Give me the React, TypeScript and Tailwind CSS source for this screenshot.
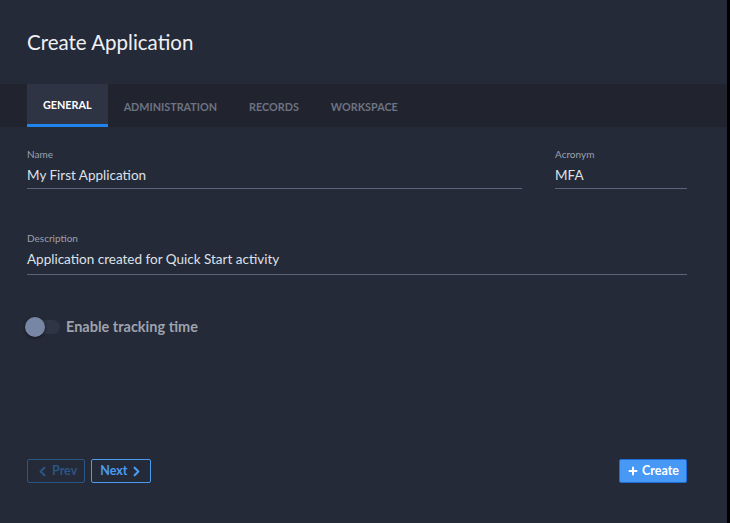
import { Plus, ChevronLeft, ChevronRight } from "lucide-react";

const tabs = ["General", "Administration", "Records", "Workspace"];

function Field({ label, value, className, tall }: { label: string; value: string; className?: string; tall?: boolean }) {
  return (
    <div className={className}>
      <div className="text-[10px] leading-[14px] text-[#9aa1b0]">{label}</div>
      <div
        className={
          tall
            ? "mt-[5px] h-[25px] border-b border-[#5b6478] text-[13.5px] leading-[18px] text-[#dde1e8]"
            : "mt-[5px] h-[23px] border-b border-[#5b6478] text-[13.5px] leading-[18px] text-[#dde1e8]"
        }
      >
        {value}
      </div>
    </div>
  );
}

export default function App() {
  return (
    <div
      className="flex h-[523px] w-[730px] overflow-hidden bg-[#252a38]"
      style={{ fontFamily: "Lato, 'Open Sans', sans-serif" }}
    >
      <div className="flex min-w-0 flex-1 flex-col">
        {/* Header */}
        <div className="flex h-[84px] items-center px-[27px]">
          <h1 className="text-[20.5px] text-[#eef0f4]">Create Application</h1>
        </div>

        {/* Tabs */}
        <div className="flex h-[43px] bg-[#21242e] px-[27px]">
          {tabs.map((t, i) => (
            <div
              key={t}
              className={
                i === 0
                  ? "flex items-center border-b-[3px] border-[#1f84ee] bg-[#2e3444] px-4 pt-[3px] text-[10.8px] font-bold uppercase text-white"
                  : "flex items-center px-4 pt-[3px] text-[10.8px] font-bold uppercase text-[#6d7383]"
              }
            >
              {t}
            </div>
          ))}
        </div>

        {/* Form */}
        <div className="flex flex-1 flex-col px-[27px] pt-[20px]">
          <div className="flex gap-[33px]">
            <Field label="Name" value="My First Application" className="w-[495px]" />
            <Field label="Acronym" value="MFA" className="w-[132px]" />
          </div>
          <Field
            label="Description"
            value="Application created for Quick Start activity"
            className="mt-[42px] w-[660px]"
            tall
          />

          <div className="mt-[41px] flex items-center gap-[6px]">
            <div className="relative h-[14px] w-[33px] rounded-full bg-[#2f3545]">
              <div className="absolute -left-[2px] -top-[3px] h-[20px] w-[20px] rounded-full bg-[#7886a6] shadow-[0_1px_3px_rgba(0,0,0,0.6)]" />
            </div>
            <span className="text-[14.5px] font-bold text-[#9ea3ad]">Enable tracking time</span>
          </div>

          <div className="mt-auto mb-[40px] flex items-center">
            <button className="flex h-[24px] items-center gap-[2px] rounded-[2px] border border-[#2b5585] pl-[7px] pr-[7px] text-[12.5px] font-bold text-[#2b5585]">
              <ChevronLeft size={15} strokeWidth={3.5} />
              Prev
            </button>
            <button className="ml-[6px] flex h-[24px] items-center gap-[2px] rounded-[2px] border border-[#4b9cf0] pl-[8px] pr-[6px] text-[12.5px] font-bold text-[#4b9cf0]">
              Next
              <ChevronRight size={15} strokeWidth={3.5} />
            </button>
            <button className="ml-auto mr-[13px] flex h-[24px] items-center gap-[3px] rounded-[2px] border border-[#1c6fd8] bg-[#4799f5] px-[7px] text-[12.5px] font-bold text-white">
              <Plus size={12} strokeWidth={4} />
              Create
            </button>
          </div>
        </div>
      </div>
      <div className="w-[3px] bg-black" />
    </div>
  );
}
